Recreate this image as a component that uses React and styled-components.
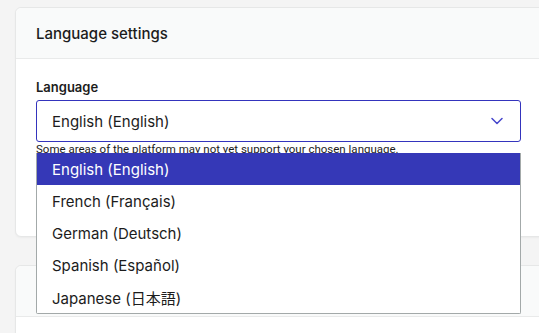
import React, { useState } from "react";
import styled, { createGlobalStyle } from "styled-components";

const Global = createGlobalStyle`
  html, body {
    margin: 0;
    padding: 0;
    background: #f4f4f4;
    overflow: hidden;
  }
  body {
    font-family: Inter, "Noto Sans", sans-serif;
    color: #1c1c1c;
  }
`;

const Page = styled.div`
  display: flex;
  flex-direction: column;
  gap: 28px;
  padding: 7px 0 0 15px;
  width: 560px;
`;

const Card = styled.section`
  background: #fff;
  border: 1px solid #e6e7e7;
  border-radius: 6px;
  box-shadow: 0 1px 2px rgba(0, 0, 0, 0.04);
`;

const CardHeader = styled.header`
  display: flex;
  align-items: center;
  height: 50px;
  padding: 0 20px;
  background: #f9fafa;
  border-bottom: 1px solid #e9eaea;
  border-radius: 6px 6px 0 0;
  font-size: 15px;
  font-weight: 450;
  color: #1c1c1c;
`;

const CardBody = styled.div`
  padding: 20px 20px ${(p) => p.$bottom || 20}px;
  min-height: ${(p) => p.$min || 0}px;
`;

const Field = styled.div`
  position: relative;
  width: 485px;
`;

const Label = styled.label`
  display: block;
  font-size: 13px;
  font-weight: 600;
  line-height: 17px;
  margin-bottom: 4px;
  color: #1c1c1c;
`;

const SelectBox = styled.button`
  display: flex;
  align-items: center;
  justify-content: space-between;
  box-sizing: border-box;
  width: 485px;
  height: 42px;
  padding: 0 17px 0 15px;
  background: #fff;
  border: 1px solid #3434bd;
  border-radius: 3px;
  font-family: Inter, sans-serif;
  font-size: 15px;
  color: #1c1c1c;
  cursor: pointer;
`;

const Help = styled.p`
  margin: 1px 0 0;
  font-family: Roboto, "Liberation Sans", Arial, sans-serif;
  font-size: 11.5px;
  line-height: 13px;
  color: #1c1c1c;
`;

const List = styled.ul`
  position: absolute;
  left: 0;
  top: 74px;
  z-index: 2;
  box-sizing: border-box;
  width: 485px;
  margin: 0;
  padding: 0;
  list-style: none;
  background: #fff;
  border: 1px solid #a3a9a9;
  border-top: none;
  border-radius: 0 0 2px 2px;
`;

const Option = styled.li`
  display: flex;
  align-items: center;
  height: 32px;
  padding-left: 15px;
  font-family: Inter, "Noto Sans CJK JP", sans-serif;
  font-size: 15px;
  background: ${(p) => (p.$active ? "#3538b7" : "#fff")};
  color: ${(p) => (p.$active ? "#fff" : "#1c1c1c")};
  cursor: default;
`;

const Chevron = () => (
  <svg width="12" height="8" viewBox="0 0 12 8" fill="none">
    <path d="M1 1.5l5 5 5-5" stroke="#4646cc" strokeWidth="1.5" strokeLinecap="round" strokeLinejoin="round" />
  </svg>
);

const languages = [
  "English (English)",
  "French (Français)",
  "German (Deutsch)",
  "Spanish (Español)",
  "Japanese (日本語)",
];

const App = () => {
  const [lang, setLang] = useState(languages[0]);

  return (
    <Page>
      <Global />
      <Card>
        <CardHeader>Language settings</CardHeader>
        <CardBody $bottom={80}>
          <Field>
            <Label>Language</Label>
            <SelectBox>
              {lang}
              <Chevron />
            </SelectBox>
            <Help>Some areas of the platform may not yet support your chosen language.</Help>
            <List>
              {languages.map((l) => (
                <Option key={l} $active={l === lang} onClick={() => setLang(l)}>
                  {l}
                </Option>
              ))}
            </List>
          </Field>
        </CardBody>
      </Card>
      <Card>
        <CardHeader />
        <CardBody $min={60} />
      </Card>
    </Page>
  );
};

export default App;
